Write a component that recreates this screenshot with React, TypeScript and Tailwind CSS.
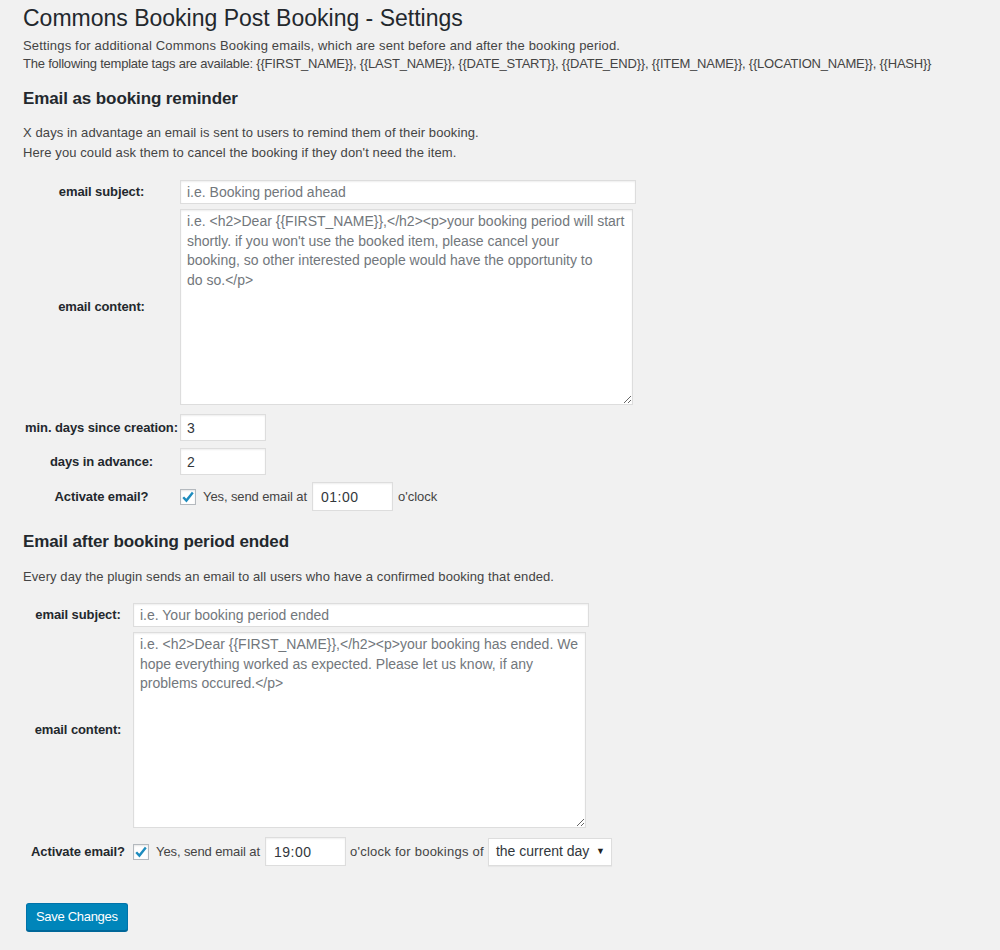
import React from "react";

const inputCls =
  "bg-white border border-[#dddddd] shadow-[inset_0_1px_2px_rgba(0,0,0,0.07)] text-[14px] text-[#32373c] outline-none placeholder:text-[#72777c] px-[6px]";

function Check() {
  return (
    <span className="inline-flex w-[16px] h-[16px] bg-white border border-[#b4b9be] shadow-[inset_0_1px_2px_rgba(0,0,0,0.1)] items-center justify-center shrink-0">
      <svg width="14" height="14" viewBox="0 0 14 14">
        <path d="M2.2 7.2 L5.4 10.6 L11.8 2.6" fill="none" stroke="#1e8cbe" strokeWidth="2.4" strokeLinejoin="miter" />
      </svg>
    </span>
  );
}

function Row({
  label,
  width,
  className,
  children,
}: {
  label: string;
  width: string;
  className?: string;
  children: React.ReactNode;
}) {
  return (
    <div className={`flex ${className ?? ""}`}>
      <div
        className={`${width} shrink-0 flex items-center justify-center text-center font-bold text-[13px] text-[#23282d] tracking-[-0.1px]`}
      >
        {label}
      </div>
      <div className="flex items-center">{children}</div>
    </div>
  );
}

export default function App() {
  return (
    <div className="min-h-[950px] bg-[#f1f1f1] pl-[23px] pt-[4px] text-[#444] text-[13px] font-['Liberation_Sans',Arial,sans-serif] tracking-[0px]">
      <h1 className="text-[23px] leading-[29px] text-[#23282d] font-normal tracking-[0px]">
        Commons Booking Post Booking - Settings
      </h1>
      <p className="mt-[4px] leading-[18px]">
        <span className="tracking-[0.17px]">
          Settings for additional Commons Booking emails, which are sent before and after the booking period.
        </span>
        <br />
        <span className="tracking-[-0.22px]">
          The following template tags are available: {"{{FIRST_NAME}}, {{LAST_NAME}}, {{DATE_START}}, {{DATE_END}}, {{ITEM_NAME}}, {{LOCATION_NAME}}, {{HASH}}"}
        </span>
      </p>

      <h2 className="mt-[15px] text-[17px] leading-[22px] font-bold text-[#23282d] tracking-[-0.1px]">
        Email as booking reminder
      </h2>
      <p className="mt-[13px] leading-[20px] tracking-[0.1px]">
        X days in advantage an email is sent to users to remind them of their booking.
        <br />
        Here you could ask them to cancel the booking if they don't need the item.
      </p>

      <div className="mt-[17px]">
        <Row label="email subject:" width="w-[157px]">
          <input className={`${inputCls} w-[456px] h-[24px]`} placeholder="i.e. Booking period ahead" />
        </Row>

        <Row label="email content:" width="w-[157px]" className="mt-[5px]">
          <textarea
            className={`${inputCls} block w-[453px] h-[196px] leading-[19.5px] py-[2px] pr-[1px] tracking-[0px]`}
            placeholder={
              "i.e. <h2>Dear {{FIRST_NAME}},</h2><p>your booking period will start\nshortly. if you won't use the booked item, please cancel your\nbooking, so other interested people would have the opportunity to\ndo so.</p>"
            }
          />
        </Row>

        <Row label="min. days since creation:" width="w-[157px]" className="mt-[9px]">
          <input className={`${inputCls} w-[86px] h-[27px]`} defaultValue="3" />
        </Row>

        <Row label="days in advance:" width="w-[157px]" className="mt-[7px]">
          <input className={`${inputCls} w-[86px] h-[27px]`} defaultValue="2" />
        </Row>

        <Row label="Activate email?" width="w-[157px]" className="mt-[7px]">
          <Check />
          <span className="ml-[7px] tracking-[-0.1px]">Yes, send email at</span>
          <input className={`${inputCls} ml-[5px] w-[81px] h-[29px] px-[8px] tracking-[0.5px]`} defaultValue="01:00" />
          <span className="ml-[5px]">o'clock</span>
        </Row>
      </div>

      <h2 className="mt-[20px] text-[17px] leading-[22px] font-bold text-[#23282d] tracking-[-0.1px]">
        Email after booking period ended
      </h2>
      <p className="mt-[14px] leading-[20px] tracking-[0.08px]">
        Every day the plugin sends an email to all users who have a confirmed booking that ended.
      </p>

      <div className="mt-[16px]">
        <Row label="email subject:" width="w-[110px]">
          <input className={`${inputCls} w-[456px] h-[24px]`} placeholder="i.e. Your booking period ended" />
        </Row>

        <Row label="email content:" width="w-[110px]" className="mt-[5px]">
          <textarea
            className={`${inputCls} block w-[453px] h-[196px] leading-[19.5px] py-[2px] pr-[1px] tracking-[0px]`}
            placeholder={
              "i.e. <h2>Dear {{FIRST_NAME}},</h2><p>your booking has ended. We\nhope everything worked as expected. Please let us know, if any\nproblems occured.</p>"
            }
          />
        </Row>

        <Row label="Activate email?" width="w-[110px]" className="mt-[9px]">
          <Check />
          <span className="ml-[7px] tracking-[-0.1px]">Yes, send email at</span>
          <input className={`${inputCls} ml-[5px] w-[81px] h-[29px] px-[8px] tracking-[0.5px]`} defaultValue="19:00" />
          <span className="ml-[4px] tracking-[0.25px]">o'clock for bookings of</span>
          <div className="ml-[4px] flex items-center bg-white border border-[#dddddd] shadow-[0_1px_1px_rgba(0,0,0,0.04)] h-[28px] w-[124px] pl-[7px] pr-[6px] text-[14px] text-[#32373c] justify-between">
            <span>the current day</span>
            <span className="text-[9px] text-[#222]">▼</span>
          </div>
        </Row>
      </div>

      <div className="mt-[37px] pl-[3px]">
        <button className="h-[28px] px-[9px] bg-[#0085ba] border border-[#0073aa] border-b-[#006799] rounded-[3px] shadow-[0_1px_0_#006799] text-white text-[13px] tracking-[-0.3px]">
          Save Changes
        </button>
      </div>
    </div>
  );
}
